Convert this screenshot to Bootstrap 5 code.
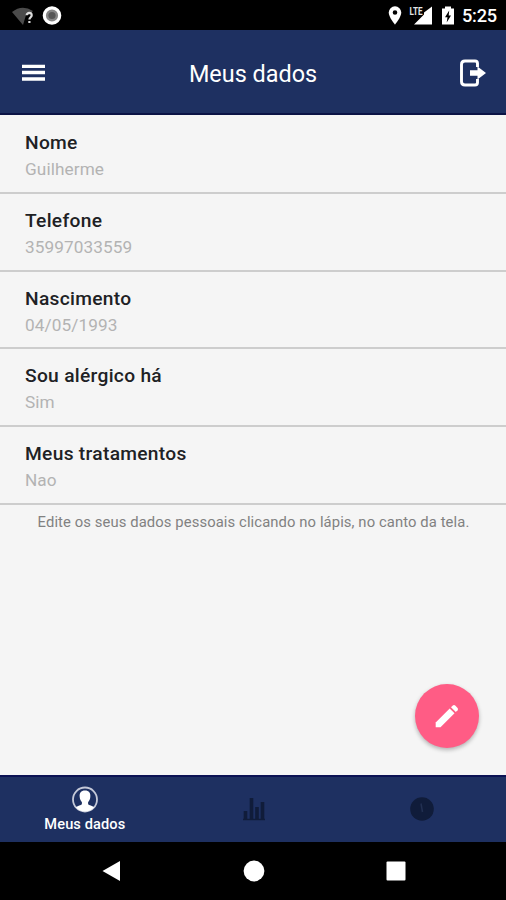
<!DOCTYPE html>
<html lang="pt-BR">
<head>
<meta charset="utf-8">
<meta name="viewport" content="width=device-width, initial-scale=1">
<title>Meus dados</title>
<link rel="stylesheet" href="https://cdn.jsdelivr.net/npm/bootstrap@5.3.0/dist/css/bootstrap.min.css">
<style>
  body { font-family: Roboto, "Liberation Sans", sans-serif; background: #f5f5f5; }
  svg { display: block; flex: none; }
  .screen { height: 900px; width: 506px; }
  .status-bar { height: 30px; background: #000; padding: 1px 9px 0 12px; }
  .signal { margin: 0 9px 0 6px; }
  .clock { font-size: 18.2px; font-weight: 500; line-height: 29px; margin-left: 8px; letter-spacing: -.2px; }
  .app-bar { height: 85px; background: #1e3061; border-bottom: 2px solid #0b1345; padding: 3px 19px 0 22px; }
  .app-title { font-size: 23.4px; line-height: 30px; font-weight: 400; padding: 1px 0 0 1px; }
  .fields { padding-top: 1px; }
  .fields .field, .fields .field:last-child { height: 77.8px; padding: 14px 25px 0; border: 0; border-bottom: 2px solid #cdcdcd; background: transparent; }
  .field-label { font-size: 19.2px; line-height: 26px; font-weight: 500; color: #202124; letter-spacing: .3px; }
  .field-value { font-size: 17.2px; line-height: 26px; color: #b3b3b3; letter-spacing: .1px; }
  .hint { font-size: 14.8px; line-height: 20px; color: #818181; margin-top: 7px; padding-left: 1px; letter-spacing: .1px; }
  .fab { width: 64px; height: 64px; background: #ff5c85; right: 27px; bottom: 27px; box-shadow: 0 2px 4px rgba(0,0,0,.28); }
  .tab-bar { height: 67px; background: #1e3061; border-top: 2px solid #0b1254; }
  .tab-name { font-size: 14.6px; line-height: 18px; font-weight: 500; padding-top: 2px; letter-spacing: .1px; }
  .tab-link { color: #101c3a; padding: 0 0 2px 1px; }
  .tab-current { padding-bottom: 0; }
  .system-bar { height: 58px; background: #000; padding: 0 100px 0 102px; }
</style>
<script src="https://cdn.jsdelivr.net/npm/bootstrap@5.3.0/dist/js/bootstrap.bundle.min.js"></script>
</head>
<body>
<div class="screen d-flex flex-column overflow-hidden">
  <div class="status-bar d-flex align-items-center justify-content-between text-white">
    <div class="d-flex align-items-center">
      <svg width="22" height="20" viewBox="0 0 22 20"><path d="M0 6Q10 -2 21 5L17 9H14L11 19Z" fill="#4b4b4b"/><path d="M14.700 9.200c0-3 5-3 5 0 0 2-2.300 2-2.300 4.400M17.400 15v2" fill="none" stroke="#ddd" stroke-width="2.200"/></svg>
      <svg class="ms-2" width="20" height="20" viewBox="0 0 20 20"><circle cx="10" cy="9.500" r="7.700" fill="#858585" stroke="#fff" stroke-width="3.200"/><circle cx="10" cy="9.500" r="3.600" fill="#555"/></svg>
    </div>
    <div class="d-flex align-items-center">
      <svg width="14" height="20" viewBox="0 0 14 20"><path fill="#fff" fill-rule="evenodd" d="M7 .3A6.300 6.300 0 0 0 .7 6.600C.7 11.300 7 18.700 7 18.700s6.300-7.400 6.300-12.100A6.300 6.300 0 0 0 7 .3Zm0 3.900a2.300 2.300 0 1 1 0 4.600 2.300 2.300 0 0 1 0-4.600Z"/></svg>
      <svg class="signal" width="25" height="28" viewBox="-1 -4 25 28"><path d="M23 .5v18H5L15 8.500V6.500Z" fill="#fff"/><text x="0.500" y="9" font-family="Roboto, sans-serif" font-size="11" font-weight="700" textLength="13" lengthAdjust="spacingAndGlyphs" fill="#e4e4e4" stroke="#000" stroke-width=".6" paint-order="stroke">LTE</text></svg>
      <svg width="12" height="20" viewBox="0 0 12 20"><path fill="#fff" d="M3 .5h6v2H12v16H0V2.500h3Z"/><path d="M7.200 4.500 3 11.300h2.500L4.700 16.500 9 9.500H6.700Z" fill="#000"/></svg>
      <span class="clock">5:25</span>
    </div>
  </div>

  <header class="app-bar d-flex align-items-center justify-content-between text-white">
    <svg width="24" height="18" viewBox="0 0 24 18"><path d="M0 2.400h23M0 8.500h23M0 15h23" stroke="#fff" stroke-width="3.400"/></svg>
    <h1 class="app-title m-0">Meus dados</h1>
    <svg width="28" height="28" viewBox="0 0 28 28"><path d="M18.500 8V4.500Q18.500 2 16 2H6Q2.500 2 2.500 5.500V22.500Q2.500 26 6 26H16Q18.500 26 18.500 23.500V20" fill="none" stroke="#fff" stroke-width="2.900"/><path d="M11 11.300H18.500V7.500L27 14 18.500 20.500V16.700H11Z" fill="#fff"/></svg>
  </header>

  <main class="flex-grow-1 position-relative">
    <ul class="list-group list-group-flush rounded-0 fields">
      <li class="list-group-item field"><div class="field-label">Nome</div><div class="field-value">Guilherme</div></li>
      <li class="list-group-item field"><div class="field-label">Telefone</div><div class="field-value">35997033559</div></li>
      <li class="list-group-item field"><div class="field-label">Nascimento</div><div class="field-value">04/05/1993</div></li>
      <li class="list-group-item field"><div class="field-label">Sou alérgico há</div><div class="field-value">Sim</div></li>
      <li class="list-group-item field"><div class="field-label">Meus tratamentos</div><div class="field-value">Nao</div></li>
    </ul>
    <p class="hint text-center mb-0">Edite os seus dados pessoais clicando no lápis, no canto da tela.</p>
    <button type="button" class="fab position-absolute rounded-circle border-0 p-0 d-flex align-items-center justify-content-center" aria-label="Editar">
      <svg width="24" height="24" viewBox="0 0 24 24" fill="#fff"><path d="M.7 18.500 14.700 4.500 19.500 9.300 5.500 23.300H.7Z"/><path d="M16 3.300 17.800 1.500Q19 .5 20.200 1.500L22.600 3.900Q23.500 5 22.600 6.200L20.800 8Z"/></svg>
    </button>
  </main>

  <nav class="tab-bar row g-0 text-center">
    <a class="col tab-link tab-current text-white text-decoration-none d-flex flex-column align-items-center justify-content-center" href="#">
      <svg width="28" height="27" viewBox="0 0 28 27"><circle cx="14" cy="13.500" r="12" fill="none" stroke="#c5c9d8" stroke-width="1.800"/><path d="M14 4.500c-4 0-5.800 2.600-5.300 6.500.2 2.600 1.200 4 2.200 5v2.200c-1 1.200-4 1.300-6 3Q8.500 25.500 14 25.500T23.100 21.200c-2-1.700-5-1.800-6-3V16c1-1 2-2.400 2.200-5 .5-3.900-1.300-6.500-5.300-6.500Z" fill="#fff"/></svg>
      <span class="tab-name">Meus dados</span>
    </a>
    <a class="col tab-link d-flex align-items-center justify-content-center" href="#" aria-label="Estatísticas">
      <svg width="22" height="24" viewBox="0 0 22 24"><path d="M2.500 14v8M8.500 1v21M14 10v12M19.500 5v17" stroke="currentColor" stroke-width="3.600"/><path d="M0 22.500h22" stroke="currentColor" stroke-width="1.500"/></svg>
    </a>
    <a class="col tab-link d-flex align-items-center justify-content-center" href="#" aria-label="Horários">
      <svg width="24" height="24" viewBox="0 0 24 24"><circle cx="12" cy="12" r="11.800" fill="currentColor"/><path d="M11 6.500 12.500 15" stroke="#223052" stroke-width="1.500"/></svg>
    </a>
  </nav>

  <div class="system-bar d-flex align-items-center justify-content-between">
    <svg width="19" height="22" viewBox="0 0 19 22"><path d="M18 1v20L.5 11Z" fill="#fff"/></svg>
    <svg width="22" height="22" viewBox="0 0 22 22"><circle cx="11" cy="11" r="10.400" fill="#fff"/></svg>
    <svg width="20" height="20" viewBox="0 0 20 20"><rect x=".5" y=".5" width="19" height="19" rx="1" fill="#fff"/></svg>
  </div>
</div>
</body>
</html>
